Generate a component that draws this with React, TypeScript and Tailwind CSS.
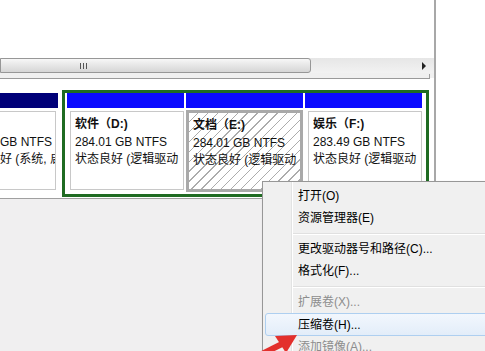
import React from 'react';

type Part = {
  name: string;
  size: string;
  status: string;
  selected?: boolean;
};

const parts: Part[] = [
  { name: '软件（D:)', size: '284.01 GB NTFS', status: '状态良好 (逻辑驱动' },
  { name: '文档（E:)', size: '284.01 GB NTFS', status: '状态良好 (逻辑驱动', selected: true },
  { name: '娱乐（F:)', size: '283.49 GB NTFS', status: '状态良好 (逻辑驱动' },
];

const menu: Array<{ label?: string; disabled?: boolean; hover?: boolean; sep?: boolean }> = [
  { label: '打开(O)' },
  { label: '资源管理器(E)' },
  { sep: true },
  { label: '更改驱动器号和路径(C)...' },
  { label: '格式化(F)...' },
  { sep: true },
  { label: '扩展卷(X)...', disabled: true },
  { label: '压缩卷(H)...', hover: true },
  { label: '添加镜像(A)...', disabled: true },
];

const Lines: React.FC<{ p: Part }> = ({ p }) => (
  <div className="text-[12px] leading-[17.5px] whitespace-nowrap text-[#111] overflow-hidden">
    <div className="font-bold">{p.name}</div>
    <div>{p.size}</div>
    <div>{p.status}</div>
  </div>
);

const PartitionBox: React.FC<{ p: Part }> = ({ p }) => (
  <div className="w-[117px] flex flex-col">
    <div className="h-[15px] bg-[#0a0aff]" />
    {p.selected ? (
      <div className="mt-[2px] h-[82px] border-[3px] border-[#a9a9a9] bg-[repeating-linear-gradient(135deg,#ffffff_0px,#ffffff_6px,#acacac_6px,#acacac_7px)] pl-[4px] pr-[2px] pt-[4px]">
        <Lines p={p} />
      </div>
    ) : (
      <div className="mt-[3px] ml-[3px] h-[79px] border border-[#c8c8c8] bg-white pl-[4px] pr-[2px] pt-[4px]">
        <Lines p={p} />
      </div>
    )}
  </div>
);

const App: React.FC = () => {
  return (
    <div className="relative w-[485px] h-[351px] overflow-hidden bg-white flex font-['Liberation_Sans','Noto_Sans_CJK_SC',sans-serif]">
      {/* main console pane */}
      <div className="w-[434px] flex flex-col">
        <div className="h-[58px] bg-white" />

        {/* horizontal scrollbar */}
        <div className="h-[15px] flex items-stretch bg-[linear-gradient(#e6e6e6,#f2f2f2)]">
          <div className="w-[311px] border border-[#979797] rounded-r-[3px] bg-[linear-gradient(#f7f7f7,#e6e6e6_50%,#d6d6d6)] flex items-center pl-[79px]">
            <div className="flex gap-[2px]">
              <div className="w-px h-[6px] bg-[#555]" />
              <div className="w-px h-[6px] bg-[#555]" />
              <div className="w-px h-[6px] bg-[#555]" />
            </div>
          </div>
          <div className="flex-1 flex items-center justify-end pr-[8px]">
            <div className="w-0 h-0 border-y-[4px] border-y-transparent border-l-[4px] border-l-[#222]" />
          </div>
        </div>
        <div className="h-[5px] bg-[#f0f0f0] flex justify-end pr-[4px]">
          <div className="w-px h-[5px] bg-[#a0a0a0] mt-[1px]" />
        </div>
        <div className="h-px w-[430px] bg-[#9a9a9a]" />

        {/* disk row */}
        <div className="h-[119px] bg-white flex items-start pt-[11px]">
          <div className="w-[58px] mt-[3px] flex flex-col">
            <div className="h-[15px] bg-[#000078]" />
            <div className="mt-[3px] w-[56px] h-[79px] border-y border-r border-[#c8c8c8] bg-white pt-[4px] overflow-hidden">
              <div className="text-[12px] leading-[17.5px] whitespace-nowrap text-[#111]">
                <div>&nbsp;</div>
                <div>GB NTFS</div>
                <div>好 (系统, 启</div>
              </div>
            </div>
          </div>
          <div className="ml-[4px] w-[367px] h-[107px] border-[3px] border-[#1f6b22] pl-[2px] pr-[3px] flex gap-[2px]">
            {parts.map((p) => (
              <PartitionBox key={p.name} p={p} />
            ))}
          </div>
        </div>
        <div className="h-px bg-[#a0a0a0]" />
        <div className="flex-1 bg-[#f0eff0]" />
      </div>
      <div className="w-[2px] bg-[#a8a8a8]" />
      <div className="flex-1 bg-white" />

      {/* context menu */}
      <div className="absolute left-[262px] top-[181px] w-[240px] h-[190px] border border-[#979797] bg-[#f0f0f0] py-[3px] text-[12px] shadow-[2px_2px_3px_rgba(0,0,0,0.25)]">
        <div className="absolute left-[28px] top-0 bottom-0 w-px bg-[#e2e3e3]" />
        <div className="absolute left-[29px] top-0 bottom-0 w-px bg-white" />
        {menu.map((m, i) =>
          m.sep ? (
            <div key={i} className="h-[9px] flex items-center pl-[30px]">
              <div className="w-full">
                <div className="h-px bg-[#e0e0e0]" />
                <div className="h-px bg-white" />
              </div>
            </div>
          ) : m.hover ? (
            <div
              key={i}
              className="relative mx-[2px] h-[23px] flex items-center pl-[32px] rounded-[3px] border border-[#aecff0] bg-[linear-gradient(#f2f7fd,#e3edf9)] text-black"
            >
              {m.label}
            </div>
          ) : (
            <div
              key={i}
              className={`relative mx-[2px] h-[22px] flex items-center pl-[33px] ${m.disabled ? 'text-[#8d8d8d]' : 'text-black'}`}
            >
              {m.label}
            </div>
          )
        )}
      </div>

      {/* red arrow */}
      <svg className="absolute left-0 top-0" width="485" height="351" viewBox="0 0 485 351">
        <line x1="246" y1="362" x2="282" y2="344" stroke="#e3302c" strokeWidth="6" />
        <polygon points="297,335 275,336 286,353" fill="#e3302c" />
      </svg>
    </div>
  );
};

export default App;
